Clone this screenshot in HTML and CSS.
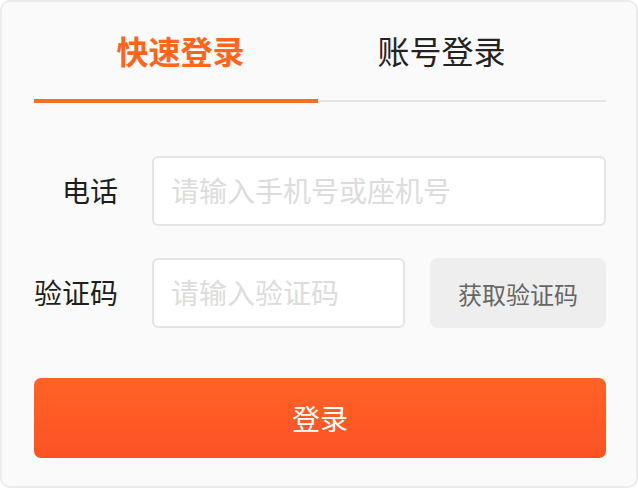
FILE: index.html
```html
<!DOCTYPE html>
<html lang="zh-CN">
<head>
  <meta charset="UTF-8">
  <meta name="viewport" content="width=device-width, initial-scale=1.0">
  <title>登录</title>
  <link rel="stylesheet" href="styles.css">
</head>
<body>
  <div class="login-card">
    <div class="tabs">
      <div class="tab active">快速登录</div>
      <div class="tab">账号登录</div>
    </div>
    <div class="tab-track">
      <div class="tab-bar"></div>
      <div class="tab-rest"></div>
    </div>

    <div class="form-row first">
      <label for="phone">电话</label>
      <input type="text" id="phone" placeholder="请输入手机号或座机号">
    </div>

    <div class="form-row">
      <label for="code">验证码</label>
      <input type="text" id="code" class="code-input" placeholder="请输入验证码">
      <button class="code-btn">获取验证码</button>
    </div>

    <button class="submit-btn">登录</button>
  </div>
</body>
</html>
```

FILE: styles.css
```css
body {
  margin: 0;
  font-family: 'Noto Sans CJK SC', 'Noto Sans', sans-serif;
  color: #222;
  background-color: #fff;
}

.login-card {
  width: 638px;
  height: 488px;
  box-sizing: border-box;
  border: 2px solid #ececec;
  border-radius: 10px;
  background-color: #fafafa;
  padding: 28px 30px 0 32px;
}

.tabs {
  display: flex;
  padding-left: 16px;
  padding-bottom: 28px;
}

.tab {
  width: 261px;
  text-align: center;
  font-size: 32px;
  line-height: 41px;
  color: #222;
}

.tab.active {
  color: #ff661c;
  font-weight: bold;
}

.tab-track {
  display: flex;
  align-items: center;
  height: 4px;
}

.tab-bar {
  width: 284px;
  height: 4px;
  background-color: #f6701c;
}

.tab-rest {
  flex: 1;
  height: 2px;
  background-color: #e5e5e5;
}

.form-row {
  display: flex;
  align-items: center;
  margin-top: 32px;
}

.form-row.first {
  margin-top: 53px;
}

label {
  width: 84px;
  margin-right: 34px;
  padding-bottom: 3px;
  text-align: right;
  font-size: 28px;
  color: #1e1e1e;
}

input {
  flex: 1;
  min-width: 0;
  height: 70px;
  box-sizing: border-box;
  border: 2px solid #e4e4e4;
  border-radius: 6px;
  background-color: #fff;
  padding: 0 17px 2px;
  font-family: inherit;
  font-size: 28px;
  color: #333;
  outline: none;
}

input::placeholder {
  color: #dcdcdc;
}

.code-input {
  flex: none;
  width: 253px;
  margin-right: 25px;
}

.code-btn {
  width: 176px;
  height: 70px;
  border: none;
  border-radius: 8px;
  background-color: #eee;
  color: #666;
  font-family: inherit;
  font-size: 24px;
}

.submit-btn {
  display: block;
  width: 100%;
  height: 80px;
  margin-top: 50px;
  padding-bottom: 2px;
  border: none;
  border-radius: 7px;
  background: linear-gradient(#ff6325, #fd5125);
  color: #fff;
  font-family: inherit;
  font-size: 28px;
}
```
